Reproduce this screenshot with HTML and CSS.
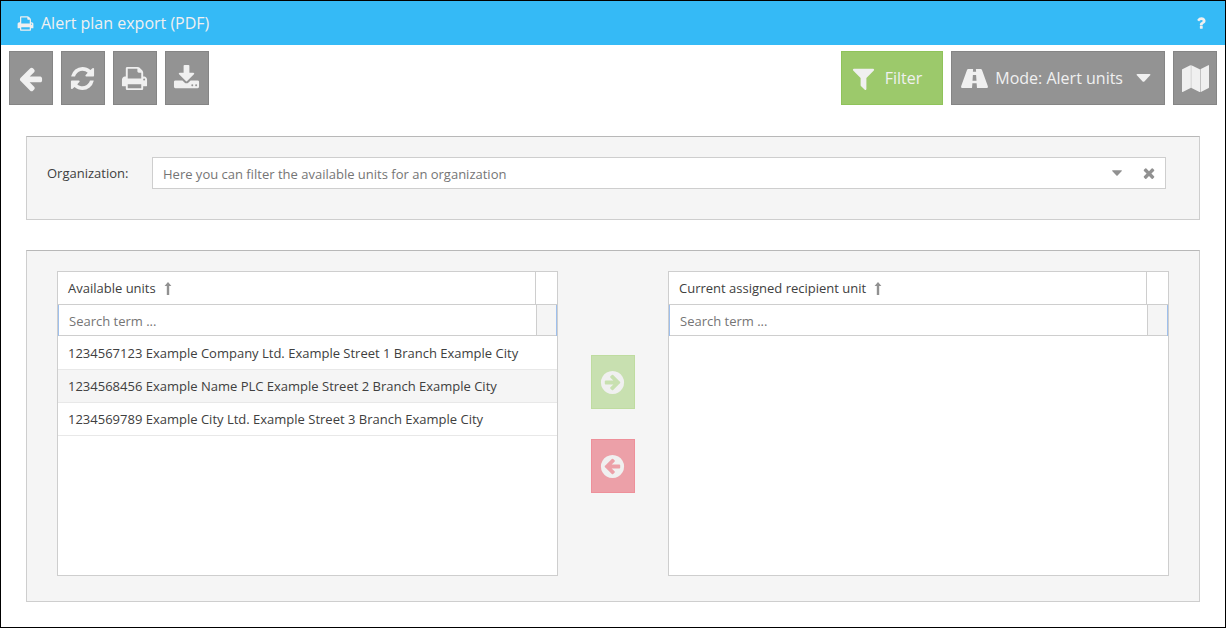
FILE: index.html
```html
<!DOCTYPE html>
<html lang="en">
<head>
<meta charset="utf-8">
<title>Alert plan export (PDF)</title>
<link rel="stylesheet" href="styles.css">
</head>
<body>
<svg class="sprite" aria-hidden="true">
  <symbol id="print" viewBox="0 0 1792 1792"><path d="M448 1536h896v-256h-896v256zm0-640h896v-384h-160q-40 0-68-28t-28-68v-160h-640v640zm1152 64q0-26-19-45t-45-19-45 19-19 45 19 45 45 19 45-19 19-45zm128 0v416q0 13-9.5 22.5t-22.5 9.5h-224v160q0 40-28 68t-68 28h-960q-40 0-68-28t-28-68v-160h-224q-13 0-22.5-9.5t-9.5-22.5v-416q0-79 56.5-135.5t135.5-56.5h64v-544q0-40 28-68t68-28h672q40 0 88 20t76 48l152 152q28 28 48 76t20 88v256h64q79 0 135.5 56.5t56.5 135.5z"/></symbol>
  <symbol id="back" viewBox="0 0 1792 1792"><path d="M1664 896v128q0 53-32.5 90.5t-84.5 37.5h-704l293 294q38 36 38 90t-38 90l-75 76q-37 37-90 37-52 0-91-37l-651-652q-37-37-37-90 0-52 37-91l651-650q38-38 91-38 52 0 90 38l75 74q38 38 38 91t-38 91l-293 293h704q52 0 84.5 37.5t32.5 90.5z"/></symbol>
  <symbol id="refresh" viewBox="0 0 1792 1792"><path d="M1639 1056q0 5-1 7-64 268-268 434.5t-478 166.5q-146 0-282.5-55t-243.5-157l-129 129q-19 19-45 19t-45-19-19-45v-448q0-26 19-45t45-19h448q26 0 45 19t19 45-19 45l-137 137q71 66 161 102t187 36q134 0 250-65t186-179q11-17 53-117 8-23 30-23h192q13 0 22.5 9.5t9.5 22.5zm25-800v448q0 26-19 45t-45 19h-448q-26 0-45-19t-19-45 19-45l138-138q-148-137-349-137-134 0-250 65t-186 179q-11 17-53 117-8 23-30 23h-199q-13 0-22.5-9.5t-9.5-22.5v-7q65-268 270-434.5t480-166.5q146 0 284 55.5t245 156.5l130-129q19-19 45-19t45 19 19 45z"/></symbol>
  <symbol id="download" viewBox="0 0 1792 1792"><path d="M1344 1344q0-26-19-45t-45-19-45 19-19 45 19 45 45 19 45-19 19-45zm256 0q0-26-19-45t-45-19-45 19-19 45 19 45 45 19 45-19 19-45zm128-224v320q0 40-28 68t-68 28h-1472q-40 0-68-28t-28-68v-320q0-40 28-68t68-28h465l135 136q58 56 136 56t136-56l136-136h464q40 0 68 28t28 68zm-325-569q17 41-14 70l-448 448q-18 19-45 19t-45-19l-448-448q-31-29-14-70 17-39 59-39h256v-448q0-26 19-45t45-19h256q26 0 45 19t19 45v448h256q42 0 59 39z"/></symbol>
  <symbol id="filter" viewBox="0 0 1792 1792"><path d="M1595 295q17 41-14 70l-493 493v742q0 42-39 59-13 5-25 5-27 0-45-19l-256-256q-19-19-19-45v-486l-493-493q-31-29-14-70 17-39 59-39h1280q42 0 59 39z"/></symbol>
  <symbol id="road" viewBox="0 0 27 27"><path fill-rule="evenodd" d="M7.200 4h4.900l-.2 2.800h3.200L14.900 4h4.900q.8 0 1.200.9l5.600 15.500q.9 2.600-.7 2.600H16l-.4-4.800h-4.200L11 23H1.100q-1.600 0-.7-2.600L6 4.900q.4-.9 1.200-.9zM11.900 10l-.4 5.800h4l-.4-5.800z"/></symbol>
  <symbol id="map" viewBox="0 0 27 27"><path d="M.3 4.200 8.300.2q.6-.2.600.4v22q0 .3-.3.500L.7 26.900q-.7.300-.7-.4V4.700q0-.3.300-.5zM9.400.3l8.300 4q.3.200.3.500v22q0 .5-.5.200l-8-4q-.3-.2-.3-.5V.6q0-.5.200-.3zM26.300.2q.7-.3.700.4v21.800q0 .3-.3.500l-7.800 4q-.4.100-.4-.4v-22q0-.3.300-.5z"/></symbol>
  <symbol id="question" viewBox="0 0 1792 1792"><path d="M1088 1256v240q0 16-12 28t-28 12h-240q-16 0-28-12t-12-28v-240q0-16 12-28t28-12h240q16 0 28 12t12 28zm316-600q0 54-15.500 101t-35 76.500-55 59.500-57.500 43.500-61 35.500q-41 23-68.500 65t-27.500 67q0 17-12 32.500t-28 15.500h-240q-15 0-25.500-18.500t-10.500-37.500v-45q0-83 65-156.500t143-108.500q59-27 84-56t25-76q0-42-46.500-74t-107.500-32q-65 0-108 29-35 25-107 115-13 16-31 16-12 0-25-8l-164-125q-13-10-15.500-25t5.500-28q160-266 464-266 80 0 161 31t146 83 106 127.500 41 158.500z"/></symbol>
  <symbol id="circle-right" viewBox="0 0 1792 1792"><path fill-rule="evenodd" d="M1413 896q0-27-18-45l-91-91-362-362q-18-18-45-18t-45 18l-91 91q-18 18-18 45t18 45l189 189h-502q-26 0-45 19t-19 45v128q0 26 19 45t45 19h502l-189 189q-19 19-19 45t19 45l91 91q18 18 45 18t45-18l362-362 91-91q18-18 18-45zm251 0q0 209-103 385.500t-279.500 279.500-385.500 103-385.500-103-279.500-279.500-103-385.500 103-385.500 279.500-279.500 385.500-103 385.500 103 279.500 279.500 103 385.500z"/></symbol>
  <symbol id="times" viewBox="0 0 1792 1792"><path d="M1490 1322q0 40-28 68l-136 136q-28 28-68 28t-68-28l-294-294-294 294q-28 28-68 28t-68-28l-136-136q-28-28-28-68t28-68l294-294-294-294q-28-28-28-68t28-68l136-136q28-28 68-28t68 28l294 294 294-294q28-28 68-28t68 28l136 136q28 28 28 68t-28 68l-294 294 294 294q28 28 28 68z"/></symbol>
  <symbol id="caret" viewBox="0 0 16 9"><path d="M1.200 0h13.600q1.300 0 .9 1.100L9 8.400q-1 .9-2 0L.3 1.100Q-.1 0 1.200 0z"/></symbol>
  <symbol id="sort" viewBox="0 0 8 14"><path d="M4 0l3.400 4H5.200v9H2.800V4H.6z"/></symbol>
</svg>
<div class="window">
  <header class="titlebar">
    <svg class="icon-title"><use href="#print"/></svg>
    <h1>Alert plan export (PDF)</h1>
    <button class="help" aria-label="Help"><svg class="icon-help"><use href="#question"/></svg></button>
  </header>
  <div class="toolbar">
    <button class="tool" aria-label="Back"><svg class="icon"><use href="#back"/></svg></button>
    <button class="tool" aria-label="Refresh"><svg class="icon"><use href="#refresh"/></svg></button>
    <button class="tool" aria-label="Print"><svg class="icon"><use href="#print"/></svg></button>
    <button class="tool" aria-label="Download"><svg class="icon"><use href="#download"/></svg></button>
    <span class="spacer"></span>
    <button class="tool wide filter"><svg class="icon"><use href="#filter"/></svg>Filter</button>
    <button class="tool wide mode"><svg class="icon"><use href="#road"/></svg>Mode: Alert units<svg class="icon-caret"><use href="#caret"/></svg></button>
    <button class="tool map" aria-label="Map"><svg class="icon"><use href="#map"/></svg></button>
  </div>
  <main>
    <section class="panel organization">
      <label for="org">Organization:</label>
      <div class="combo">
        <input id="org" type="text" placeholder="Here you can filter the available units for an organization">
        <button aria-label="Open list"><svg class="icon-open"><use href="#caret"/></svg></button>
        <button aria-label="Clear"><svg class="icon-clear"><use href="#times"/></svg></button>
      </div>
    </section>
    <section class="panel transfer">
      <div class="list">
        <table>
          <colgroup><col><col class="col-end"></colgroup>
          <thead>
            <tr><th>Available units<svg class="icon-sort"><use href="#sort"/></svg></th><th></th></tr>
            <tr><td colspan="2"><div class="search"><input type="text" aria-label="Search available units" placeholder="Search term ..."><span></span></div></td></tr>
          </thead>
          <tbody>
            <tr><td colspan="2">1234567123 Example Company Ltd. Example Street 1 Branch Example City</td></tr>
            <tr><td colspan="2">1234568456 Example Name PLC Example Street 2 Branch Example City</td></tr>
            <tr><td colspan="2">1234569789 Example City Ltd. Example Street 3 Branch Example City</td></tr>
          </tbody>
        </table>
      </div>
      <div class="moves">
        <button class="tool add" disabled aria-label="Assign unit"><svg class="icon"><use href="#circle-right"/></svg></button>
        <button class="tool remove" disabled aria-label="Remove unit"><svg class="icon flip"><use href="#circle-right"/></svg></button>
      </div>
      <div class="list">
        <table>
          <colgroup><col><col class="col-end"></colgroup>
          <thead>
            <tr><th>Current assigned recipient unit<svg class="icon-sort"><use href="#sort"/></svg></th><th></th></tr>
            <tr><td colspan="2"><div class="search"><input type="text" aria-label="Search assigned units" placeholder="Search term ..."><span></span></div></td></tr>
          </thead>
        </table>
      </div>
    </section>
  </main>
</div>
</body>
</html>
```
FILE: styles.css
```css
* { box-sizing: border-box; }
body {
  margin: 0;
  font: 13px/20px "Open Sans", "Noto Sans", sans-serif;
  color: #404040;
  background: #fff;
}
button, input { font: inherit; color: inherit; margin: 0; padding: 0; border: 0; background: none; }
svg { display: block; flex: none; fill: currentColor; }
.sprite { position: absolute; width: 0; height: 0; }
.window { min-height: 100vh; border: 1px solid #000; }

.titlebar {
  display: flex;
  align-items: center;
  height: 44px;
  padding: 0 16px;
  background: #35baf6;
  color: #f0f0f0;
}
.titlebar h1 { flex: 1; margin: 0 0 0 7px; font-size: 16px; font-weight: 400; }
.icon-title { width: 17px; height: 17px; }
.icon-help { width: 16px; height: 16px; }

.toolbar { display: flex; gap: 8px; padding: 6px 8px; }
.spacer { flex: 1; }
.tool {
  display: flex;
  align-items: center;
  justify-content: center;
  width: 44px;
  height: 54px;
  padding-right: 1px;
  border: 1px solid #858585;
  background: #939393;
  color: #f0f0f0;
  font-size: 16px;
}
.icon { width: 27px; height: 27px; }
.map { padding: 0 0 0 1px; }
.wide { width: auto; justify-content: flex-start; padding: 0 8px; }
.filter { gap: 8px; padding-right: 20px; border-color: #8fc35a; background: #9cc96b; }
.mode { gap: 7px; padding: 0 13px 0 9px; }
.icon-caret { width: 15px; height: 8px; margin-left: 6px; }

main { padding: 25px; }
.panel { border: 1px solid #cecece; border-top-color: #b8b8b8; background: #f5f5f5; }
.organization { display: flex; align-items: flex-start; padding: 20px 33px 30px 20px; margin-bottom: 30px; }
.organization label { width: 105px; padding: 6px 0; }
.combo { display: flex; flex: 1; height: 32px; border: 1px solid #cecece; background: #fff; }
.combo input { flex: 1; padding: 2px 10px 0; }
.combo button { display: flex; align-items: center; justify-content: center; width: 32px; color: #919191; }
.icon-open { width: 10px; height: 6px; }
.icon-clear { width: 16px; height: 16px; }
input::placeholder { color: #757575; opacity: 1; }

.transfer { display: grid; grid-template-columns: 1fr 110px 1fr; padding: 20px 30px 25px; }
.list { min-height: 305px; border: 1px solid #cecece; background: #fff; }
table { width: 100%; table-layout: fixed; border-collapse: separate; border-spacing: 0; }
.col-end { width: 22px; }
th, td { padding: 0; text-align: left; font-weight: 400; }
th { height: 33px; padding: 0 10px; border-bottom: 1px solid #cecece; }
th + th { border-left: 1px solid #cecece; }
.icon-sort { display: inline-block; width: 8px; height: 14px; margin-left: 8px; vertical-align: -3px; color: #919191; }
.search {
  display: flex;
  height: 31px;
  border: solid #9ebfec;
  border-width: 0 1px;
}
.search input { flex: 1; min-width: 0; padding: 2px 10px 0; border-bottom: 1px solid #cecece; }
.search span { width: 20px; border: solid #cecece; border-width: 0 0 1px 1px; background: #f5f5f5; }
tbody td { height: 33px; padding: 0 10px; border-bottom: 1px solid #e8e8e8; color: #404040; }
tbody tr:first-child td { height: 34px; padding-top: 1px; }
tbody tr:nth-child(even) td { background: #f5f5f5; }

.moves { display: flex; flex-direction: column; align-items: center; gap: 30px; padding-top: 84px; }
.add { border-color: #bfdca0; background: #c8e0b0; }
.remove { border-color: #ee909a; background: #eca0a8; }
.flip { transform: scaleX(-1); }
```
